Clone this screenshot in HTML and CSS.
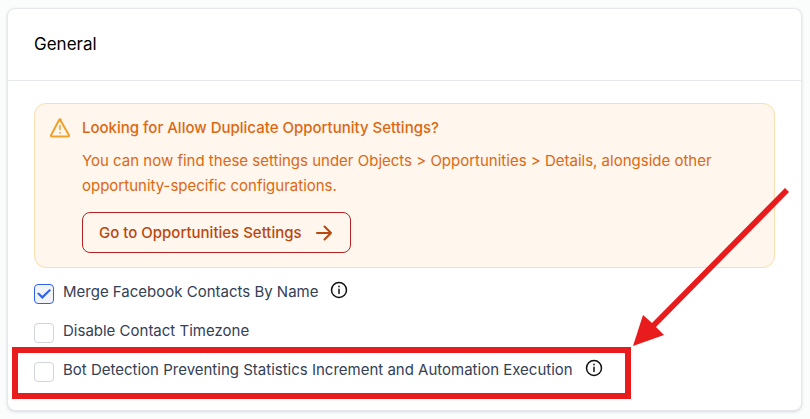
FILE: index.html
```html
<!DOCTYPE html>
<html lang="en">
<head>
    <meta charset="UTF-8" />
    <meta name="viewport" content="width=device-width, initial-scale=1.0" />
    <title>General Settings</title>
    <link rel="stylesheet" href="styles.css">
</head>
<body>
    <main class="card">
        <header class="card-header">
            <h1>General</h1>
        </header>

        <div class="card-body">
            <section class="alert">
                <svg class="alert-icon" viewBox="0 0 20 20" aria-hidden="true">
                    <path d="M10 1.5 19 17.2Q19.3 18.5 18 18.5H2Q.7 18.5 1 17.2L9.1 2Q10 .6 10.9 2Z" />
                    <path class="thin" d="M10 7.500v4M10 14.500v.5" />
                </svg>
                <div class="alert-content">
                    <h2>Looking for Allow Duplicate Opportunity Settings?</h2>
                    <p>You can now find these settings under Objects &gt; Opportunities &gt; Details, alongside other opportunity-specific configurations.</p>
                    <button type="button" class="alert-button">
                        Go to Opportunities Settings
                        <svg viewBox="0 0 16 16" aria-hidden="true">
                            <path d="M1 8h14M8.500 1.500 15 8l-6.500 6.500" />
                        </svg>
                    </button>
                </div>
            </section>

            <div class="options">
                <div class="option">
                    <input type="checkbox" id="merge-contacts" checked>
                    <label for="merge-contacts">Merge Facebook Contacts By Name</label>
                    <svg class="info" viewBox="0 0 18 18" aria-hidden="true">
                        <circle cx="9" cy="9" r="7.500" />
                        <path d="M9 8.200v4.300M9 5.300v.5" />
                    </svg>
                </div>
                <div class="option">
                    <input type="checkbox" id="disable-timezone">
                    <label for="disable-timezone">Disable Contact Timezone</label>
                </div>
                <div class="option highlighted">
                    <input type="checkbox" id="bot-detection">
                    <label for="bot-detection">Bot Detection Preventing Statistics Increment and Automation Execution</label>
                    <svg class="info" viewBox="0 0 18 18" aria-hidden="true">
                        <circle cx="9" cy="9" r="7.500" />
                        <path d="M9 8.200v4.300M9 5.300v.5" />
                    </svg>
                    <svg class="arrow" viewBox="0 0 156 158" aria-hidden="true">
                        <path d="M152 0 156 4 23 139 31 147 0 158 10 127 19 135Z" />
                    </svg>
                </div>
            </div>
        </div>
    </main>
</body>
</html>
```

FILE: styles.css
```css
* {
    box-sizing: border-box;
}

body {
    margin: 0;
    padding: 8px 8px 8px 7px;
    background-color: #fbfdfd;
    color: #344054;
    font-family: Inter, "Liberation Sans", sans-serif;
    font-size: 15px;
}

h1, h2, p {
    margin: 0;
}

svg {
    flex: none;
    fill: none;
    stroke: currentColor;
    stroke-linecap: round;
    stroke-linejoin: round;
}

.card {
    background-color: #fff;
    border: 1px solid #e7e8ee;
    border-radius: 8px;
    box-shadow: 0 1px 3px rgba(16, 24, 40, 0.15);
}

.card-header {
    padding: 23px 26px 24px;
    border-bottom: 1px solid #e7e8ee;
}

.card-header h1 {
    color: #000;
    font-size: 17px;
    font-weight: 400;
    line-height: 24px;
}

.card-body {
    padding: 22px 26px 28px;
}

.alert {
    display: flex;
    gap: 12px;
    padding: 14px 15px;
    background-color: #fff6ed;
    border: 1px solid #f9dfaf;
    border-radius: 12px;
    color: #dc6813;
}

.alert-icon {
    width: 20px;
    height: 20px;
    color: #eea12b;
    stroke-width: 2;
}

.alert-icon .thin {
    stroke-width: 1.5;
}

.alert-content h2 {
    margin-bottom: 10px;
    font-size: 15px;
    font-weight: 500;
    line-height: 20px;
}

.alert-content p {
    margin-bottom: 14px;
    line-height: 25px;
}

.alert-button {
    display: flex;
    align-items: center;
    gap: 14px;
    padding: 10px 18px 10px 16px;
    background: transparent;
    border: 1px solid #b42323;
    border-radius: 8px;
    color: #b9480e;
    font-family: inherit;
    font-size: 15px;
    font-weight: 500;
    line-height: 19px;
    cursor: pointer;
}

.alert-button svg {
    width: 16px;
    height: 16px;
    stroke-width: 2;
}

.options {
    display: flex;
    flex-direction: column;
    align-items: flex-start;
    gap: 19px;
    margin-top: 16px;
}

.option {
    display: flex;
    height: 20px;
}

.option input {
    appearance: none;
    flex: none;
    width: 20px;
    height: 20px;
    margin: 0 9px 0 0;
    background-color: #fff;
    border: 1px solid #d0d5dd;
    border-radius: 4px;
    cursor: pointer;
}

.option input:checked {
    display: grid;
    place-items: center;
    background-color: #f2f4f7;
    border-color: #2f62ee;
}

.option input:checked::before {
    content: "";
    width: 14px;
    height: 10px;
    background-color: #2f62ee;
    clip-path: polygon(0 45%, 12% 35%, 38% 68%, 90% 0, 100% 13%, 38% 100%);
}

.option label {
    line-height: 16px;
}

.info {
    width: 18px;
    height: 18px;
    margin: -3px 0 0 12px;
    color: #111;
    stroke-width: 1.5;
}

/* red callout drawn over the option */
.highlighted {
    position: relative;
}

.highlighted::after {
    content: "";
    position: absolute;
    inset: -15px -28px -17px -22px;
    border: 6px solid #e81c1c;
    pointer-events: none;
}

.arrow {
    position: absolute;
    left: calc(100% + 30px);
    bottom: 36px;
    width: 156px;
    height: 158px;
    fill: #e81c1c;
    stroke: none;
    pointer-events: none;
}
```
